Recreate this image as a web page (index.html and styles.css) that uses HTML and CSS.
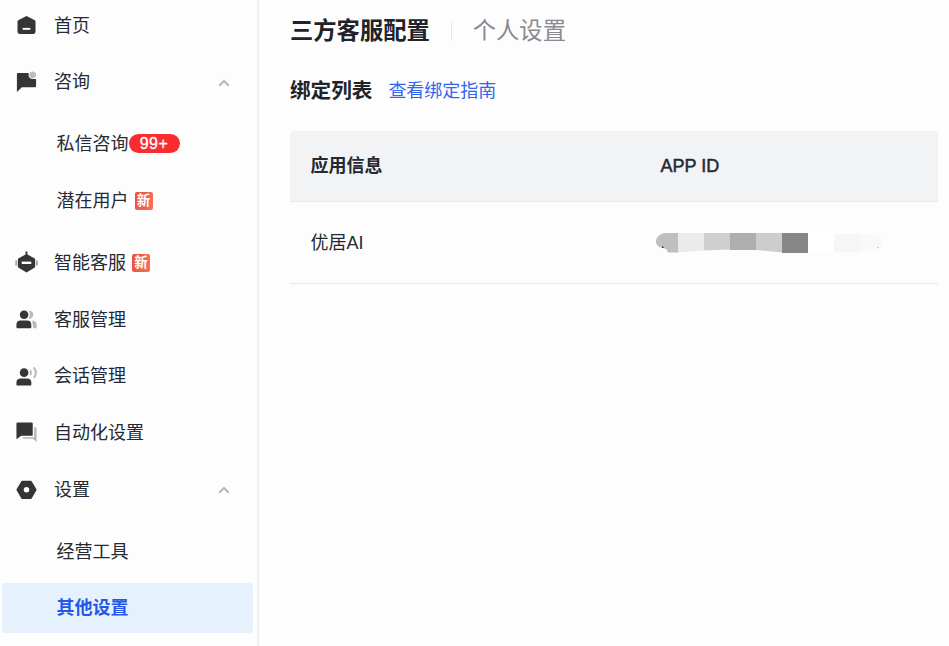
FILE: index.html
```html
<!DOCTYPE html>
<html lang="zh-CN">
<head>
<meta charset="utf-8">
<title>三方客服配置</title>
<link rel="stylesheet" href="styles.css">
</head>
<body>
<div class="app">
  <nav class="sidebar">
    <a class="item"><svg class="icon" viewBox="0 0 24 24"><path fill="#353535" d="M12 2.200 20.200 6.200Q21.400 6.800 21.400 8V18.600Q21.400 20.800 19.200 20.800H4.800Q2.600 20.800 2.600 18.600V8Q2.600 6.800 3.800 6.200Z"/><path stroke="#fff" stroke-width="2" d="M8 15.500h8"/></svg><span>首页</span></a>
    <a class="item"><svg class="icon" viewBox="0 0 24 24"><path fill="#353535" d="M3 2H14.200Q13.400 8.300 19 8.300H22V15.800Q22 17 20.800 17H7.200L2 22V3Q2 2 3 2Z"/><circle cx="18.500" cy="4" r="3.500" fill="#bdbdbd"/></svg><span>咨询</span><svg class="chevron" viewBox="0 0 12 8"><path d="M1.300 6.700 6 2 10.700 6.700"/></svg></a>
    <div class="submenu">
      <a class="item sub"><span>私信咨询</span><b class="count">99+</b></a>
      <a class="item sub"><span>潜在用户</span><b class="new">新</b></a>
    </div>
    <a class="item"><svg class="icon" viewBox="0 0 24 24"><path fill="#353535" d="M11 .5h2v3.200l8 4.300V17l-9 5.400L3 17V8l8-4.300Z"/><path stroke="#fff" stroke-width="2.500" d="M7 12.300h10"/><path stroke="#929292" stroke-width="1.500" d="M1.200 10v5M22.800 10v5"/></svg><span>智能客服</span><b class="new">新</b></a>
    <a class="item"><svg class="icon" viewBox="0 0 24 24"><circle cx="9.500" cy="7" r="4.500" fill="#353535"/><path fill="#353535" d="M1.500 20v-2.500Q1.500 13 6 13h6.500Q17 13 17 17.500V20q0 1-1 1H2.500q-1 0-1-1Z"/><path fill="#b8b8b8" d="M14 2.500q5 .5 5 4.500t-5 4.500q3-4.500 0-9ZM18 13q4.500.5 4.500 4.500V21H19Z"/></svg><span>客服管理</span></a>
    <a class="item"><svg class="icon" viewBox="0 0 24 24"><circle cx="9.500" cy="8" r="4.500" fill="#353535"/><path fill="#353535" d="M1.500 20.500V18q0-4 4.500-4h6.500q4.500 0 4.500 4v2.500q0 1-1 1H2.500q-1 0-1-1Z"/><path fill="none" stroke="#b8b8b8" stroke-width="2" d="M15.800 5.500q1.600 2.500 0 5M19.500 2.500Q24 8 19.500 13.500"/></svg><span>会话管理</span></a>
    <a class="item"><svg class="icon" viewBox="0 0 24 24"><path fill="#353535" d="M2.500 1.500H17.500Q18.500 1.500 18.500 2.500V14.500Q18.500 15.500 17.500 15.500H6.500L1.500 19V2.500Q1.500 1.500 2.500 1.500Z"/><path fill="#b8b8b8" d="M20 6.500h1.500q1 0 1 1V22l-4-3.500H9q-1 0-1-1V17h12Z"/></svg><span>自动化设置</span></a>
    <a class="item"><svg class="icon" viewBox="0 0 24 24"><path fill="#353535" stroke="#353535" stroke-width="2" stroke-linejoin="round" d="M7.500 3.800h9L21.500 12.300l-5 8.500h-9L2.500 12.300Z"/><circle cx="12" cy="12.300" r="2.900" fill="#fff"/></svg><span>设置</span><svg class="chevron" viewBox="0 0 12 8"><path d="M1.300 6.700 6 2 10.700 6.700"/></svg></a>
    <div class="submenu">
      <a class="item sub"><span>经营工具</span></a>
      <a class="item sub active"><span>其他设置</span></a>
    </div>
  </nav>
  <main class="content">
    <header class="tabs"><span class="tab current">三方客服配置</span><span class="tab">个人设置</span></header>
    <div class="heading"><h2>绑定列表</h2><a>查看绑定指南</a></div>
    <div class="table">
      <div class="row head"><span>应用信息</span><span class="latin">APP ID</span></div>
      <div class="row"><span>优居AI</span>
        <svg class="mask" viewBox="0 0 228 22"><path fill="#bfbfbf" d="M10 1H23V20.500H13Q12 16 7 16Q0 14 1 8Q3 2 10 1Z"/><path fill="#ebebec" d="M23 1H49V18.500L23 20.500Z"/><path fill="#cfcfd0" d="M49 1H75V17.500L49 18.500Z"/><path fill="#afafb0" d="M75 1h26v17H75Z"/><path fill="#cdcdce" d="M101 1h26v19.500L101 18Z"/><path fill="#878787" d="M127 1h26v20h-26Z"/><path fill="#fff" d="M153 1h26v20h-26Z"/><path fill="#f6f6f6" d="M179 2h26v18.500h-26Z"/><path fill="#f9f9f9" d="M205 2h12q9 0 10 7 0 8-9 9l-13 2Z"/><path fill="#333" d="M7 14.500h1.500V16H7Z"/><path fill="#ccc" d="M222 15h2v1h-2Z"/></svg>
      </div>
    </div>
  </main>
</div>
</body>
</html>
```
FILE: styles.css
```css
* { box-sizing: border-box; }
body {
  margin: 0;
  background: #fdfdfd;
  color: #252931;
  font: 18px/1.2 "Liberation Sans", "Noto Sans CJK SC", sans-serif;
}
.app { display: flex; height: 646px; overflow: hidden; }
.sidebar {
  width: 259px;
  flex: none;
  padding-left: 2px;
  border-right: 2px solid #f0f0f1;
}
.item {
  display: flex;
  align-items: center;
  width: 251px;
  height: 50.7px;
  margin-bottom: 6px;
  padding-left: 13px;
  white-space: nowrap;
}
.item span, .row span { padding-top: 2px; }
.icon { width: 23px; height: 23px; margin-right: 16px; flex: none; }
.chevron { width: 12px; height: 8px; margin: 1px 23px 0 auto; }
.chevron path { fill: none; stroke: #b5b7bb; stroke-width: 2; }
.submenu { padding: 5.3px 0; }
.sub { padding-left: 54.5px; }
.active {
  border-radius: 2px;
  background: #e5f2fd;
  color: #2457e8;
  font-weight: 700;
}
.count {
  width: 51px;
  height: 19px;
  margin-top: -1px;
  border-radius: 10px;
  background: #fa2c30;
  color: #fff;
  font: 16px/19px "Liberation Sans", sans-serif;
  -webkit-text-stroke: .3px #fff;
  letter-spacing: .5px;
  text-align: center;
}
.new {
  width: 18px;
  height: 18px;
  margin-left: 6px;
  border-radius: 2px;
  background: linear-gradient(100deg, #e94f40, #f67457);
  color: #fff;
  font-size: 13.5px;
  line-height: 17px;
  text-align: center;
}
.content { flex: 1; padding: 18px 11px 0 31px; }
.tabs { display: flex; align-items: center; height: 28px; font-size: 23.3px; color: #878a90; }
.current {
  padding-right: 21px;
  margin-right: 22px;
  color: #202329;
  font-weight: 700;
}
.current + .tab { position: relative; }
.current + .tab::before {
  content: "";
  position: absolute;
  left: -22px;
  top: 3px;
  width: 1px;
  height: 20px;
  background: #e8e9eb;
}
.heading { display: flex; align-items: center; height: 28px; margin-top: 31px; }
.heading h2 { margin: 0 16px 0 0; font-size: 20.6px; font-weight: 700; color: #202329; }
.heading a { color: #3264f2; margin-top: 2px; }
.table { margin-top: 26px; }
.row {
  display: grid;
  grid-template-columns: 350px 1fr;
  align-items: center;
  height: 82px;
  padding-left: 20.5px;
  border-bottom: 1px solid #e8e9eb;
}
.head {
  height: 71px;
  border-radius: 5px 0 0 0;
  background: #f2f3f5;
  font-weight: 700;
}
.head .latin { font-weight: 400; -webkit-text-stroke: .5px #252931; }
.mask { width: 228px; height: 22px; margin-left: -6px; margin-top: 1px; }
```
